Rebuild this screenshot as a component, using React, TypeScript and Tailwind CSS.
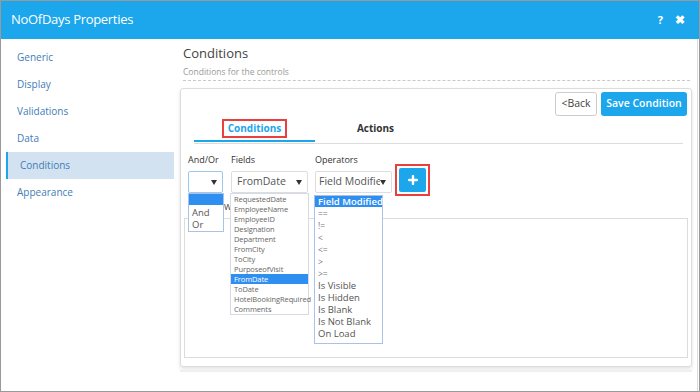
import React from 'react';

const navItems = ['Generic', 'Display', 'Validations', 'Data', 'Conditions', 'Appearance'];

const fieldOptions = [
    'RequestedDate',
    'EmployeeName',
    'EmployeeID',
    'Designation',
    'Department',
    'FromCity',
    'ToCity',
    'PurposeofVisit',
    'FromDate',
    'ToDate',
    'HotelBookingRequired',
    'Comments',
];

const operatorOptions = [
    { label: 'Field Modified', small: false },
    { label: '==', small: true },
    { label: '!=', small: true },
    { label: '<', small: true },
    { label: '<=', small: true },
    { label: '>', small: true },
    { label: '>=', small: true },
    { label: 'Is Visible', small: false },
    { label: 'Is Hidden', small: false },
    { label: 'Is Blank', small: false },
    { label: 'Is Not Blank', small: false },
    { label: 'On Load', small: false },
];

function Caret() {
    return (
        <svg width="6" height="5" viewBox="0 0 6 5" className="shrink-0">
            <path d="M0 0 L6 0 L3 5 Z" fill="#333" />
        </svg>
    );
}

function Sidebar() {
    return (
        <div className="w-[173px] shrink-0 pt-[5px]">
            {navItems.map((item) =>
                item === 'Conditions' ? (
                    <div
                        key={item}
                        className="ml-[5px] h-[27px] flex items-center pl-[12px] bg-[#d3e2f0] border-l-2 border-[#1ca6eb] text-[10px] text-[#3f7cb8]"
                    >
                        {item}
                    </div>
                ) : (
                    <div key={item} className="h-[27px] flex items-center pl-[16px] text-[10px] text-[#3f7cb8]">
                        {item}
                    </div>
                )
            )}
        </div>
    );
}

function ConditionsForm() {
    return (
        <div className="pl-[7px]">
            <div className="flex text-[9px] text-[#333] h-[22px] items-end">
                <span className="w-[43px]">And/Or</span>
                <span className="w-[84px]">Fields</span>
                <span>Operators</span>
            </div>
            <div className="flex items-start mt-[5px]">
                {/* And/Or select */}
                <div className="relative w-[35px] h-[22px] border border-[#9cc7ee] rounded-[2px] flex items-center justify-end pr-[5px] bg-white">
                    <Caret />
                    <div className="absolute left-[-1px] top-[21px] w-[36px] h-[39px] border border-[#a9c2e6] bg-white z-10 text-[9.5px] text-[#555] leading-[12px]">
                        <div className="h-[11px] bg-[#2f8ff0]" />
                        <div className="pl-[3px] mt-[2px]">And</div>
                        <div className="pl-[3px]">Or</div>
                    </div>
                </div>

                {/* Fields select */}
                <div className="relative ml-[8px] w-[77px] h-[22px] border border-[#ddd] rounded-[2px] flex items-center justify-between pl-[5px] pr-[5px] bg-white">
                    <span className="text-[10.5px] text-[#555]">FromDate</span>
                    <Caret />
                    <div className="absolute left-[-2px] top-[21px] w-[79px] border border-[#d4dbe6] bg-white z-10 text-[7.5px] tracking-[-0.1px] text-[#666]">
                        {fieldOptions.map((f) => (
                            <div
                                key={f}
                                className={
                                    f === 'FromDate'
                                        ? 'h-[10px] leading-[10px] pl-[3px] bg-[#2f8ff0] text-white whitespace-nowrap'
                                        : 'h-[10px] leading-[10px] pl-[3px] whitespace-nowrap'
                                }
                            >
                                {f}
                            </div>
                        ))}
                    </div>
                </div>

                {/* Operators select */}
                <div className="relative ml-[7px] w-[77px] h-[22px] border border-[#ddd] rounded-[2px] flex items-center pl-[3px] pr-[5px] bg-white">
                    <span className="text-[10.5px] text-[#555] whitespace-nowrap overflow-hidden w-[62px]">Field Modified</span>
                    <Caret />
                    <div className="absolute left-[-2px] top-[23px] w-[69px] border border-[#a9c2e6] bg-white z-10 pb-[3px]">
                        {operatorOptions.map((o, i) => (
                            <div
                                key={o.label}
                                className={
                                    i === 0
                                        ? 'h-[11px] leading-[11px] mb-[1px] pl-[3px] bg-[#2f8ff0] text-white text-[9.5px] font-semibold whitespace-nowrap'
                                        : o.small
                                          ? 'h-[12px] leading-[12px] pl-[3px] text-[8.5px] text-[#777]'
                                          : 'h-[12px] leading-[12px] pl-[3px] text-[9.5px] text-[#555]'
                                }
                            >
                                {o.label}
                            </div>
                        ))}
                    </div>
                </div>

                {/* Add button */}
                <div className="ml-[3px] mt-[-7px] p-[2px] border-2 border-[#e8403f]">
                    <button className="w-[27px] h-[24px] bg-[#1ca6eb] rounded-[2px] flex items-center justify-center">
                        <svg width="10" height="10" viewBox="0 0 10 10">
                            <path d="M5 1 V9 M1 5 H9" stroke="white" strokeWidth="2.4" strokeLinecap="round" />
                        </svg>
                    </button>
                </div>
            </div>
            <div className="h-[22px] pl-[36px] text-[10px] text-[#555] leading-[20px]">w</div>
        </div>
    );
}

export default function App() {
    return (
        <div
            className="w-[700px] h-[392px] border border-[#9a9a9a] bg-white flex flex-col overflow-hidden"
            style={{ fontFamily: '"Open Sans", "Liberation Sans", sans-serif' }}
        >
            <div className="h-[38px] shrink-0 bg-[#1ca6eb] flex items-center justify-between pl-[10px] pr-[14px]">
                <span className="text-[13px] text-white tracking-[-0.3px]">NoOfDays Properties</span>
                <div className="flex items-center gap-[12px] text-white font-bold">
                    <span className="text-[11px]">?</span>
                    <span className="text-[12px]">✖</span>
                </div>
            </div>

            <div className="flex-1 flex mr-[1px] border-r border-[#dcdcdc]">
                <Sidebar />

                <div className="flex-1 flex flex-col pl-[6px] pr-[5px]">
                    <div className="pl-[3px] pt-[5px] pr-[2px]">
                        <div className="text-[13px] text-[#444] leading-[18px]">Conditions</div>
                        <div className="text-[8.5px] text-[#999] mt-[4px] leading-[12px]">Conditions for the controls</div>
                        <div className="border-b border-dashed border-[#c8c8c8] mt-[2px]" />
                    </div>

                    <div className="mt-[7px] h-[279px] border border-[#dcdcdc] rounded-[3px] shadow-[0_2px_4px_rgba(0,0,0,0.12)] flex flex-col">
                        <div className="flex justify-end gap-[4px] pt-[3px] pr-[4px]">
                            <button className="w-[42px] h-[24px] border border-[#ccc] rounded-[3px] text-[10.5px] text-[#444] bg-white">
                                &lt;Back
                            </button>
                            <button className="w-[86px] h-[24px] rounded-[3px] text-[10.5px] font-semibold text-white bg-[#1ca6eb]">
                                Save Condition
                            </button>
                        </div>

                        <div className="flex ml-[13px] mr-[8px] border-b border-[#dcdcdc] mt-[3px]">
                            <div className="w-[121px] h-[23px] flex justify-center mb-[1px] border-b-2 border-[#1ca6eb]">
                                <span className="px-[4px] h-[19px] border-2 border-[#e8403f] text-[10px] font-bold text-[#1ca6eb] leading-[15px]">
                                    Conditions
                                </span>
                            </div>
                            <div className="w-[121px] h-[23px] flex justify-center pt-[2px] text-[10px] font-bold text-[#333]">
                                Actions
                            </div>
                        </div>

                        <div>
                            <ConditionsForm />
                        </div>

                        <div className="mx-[3px] mb-[8px] flex-1 border border-[#dcdcdc]" />
                    </div>

                    <div className="mt-[3px] border-t-2 border-[#efefef]" />
                </div>
            </div>
        </div>
    );
}
